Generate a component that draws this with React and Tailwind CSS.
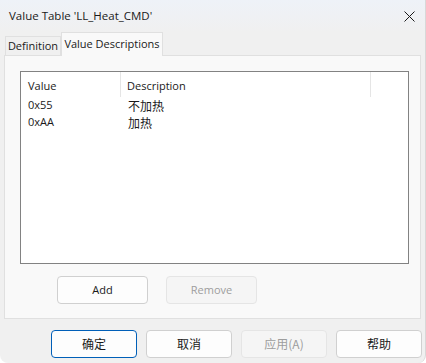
import React from "react";

const font = { fontFamily: '"Open Sans", "Noto Sans", "Noto Sans CJK SC", sans-serif' };
const cjk = { fontFamily: '"Noto Sans CJK SC", sans-serif' };

function Btn({ children, disabled, primary, className = "" }) {
  let tone = "bg-[#fdfdfd] border-[#d0d0d0] text-[#1a1a1a]";
  if (disabled) tone = "bg-[#f5f5f5] border-[#e5e5e5] text-[#9d9d9d]";
  if (primary) tone = "bg-[#fdfdfd] border-[#005fb8] text-[#1a1a1a]";
  return (
    <div className={`flex items-center justify-center rounded-[4px] border whitespace-nowrap ${tone} ${className}`}>
      {children}
    </div>
  );
}

export default function App() {
  const rows = [
    { value: "0x55", desc: "不加热" },
    { value: "0xAA", desc: "加热" },
  ];

  return (
    <div style={font} className="w-[426px] h-[363px] bg-[#f0f0f0] flex flex-col border-r border-[#d8d8d8] rounded-b-[8px] overflow-hidden text-[11px]">
      {/* title bar */}
      <div className="h-[32px] shrink-0 flex items-center justify-between bg-gradient-to-b from-[#eef2f8] to-[#f0f0f0] pl-[9px] pr-[10px]">
        <span className="text-[11.5px] text-[#1a1a1a] whitespace-nowrap">Value Table 'LL_Heat_CMD'</span>
        <svg width="11" height="11" viewBox="0 0 11 11">
          <path d="M0.5 0.5 L10.5 10.5 M10.5 0.5 L0.5 10.5" stroke="#1a1a1a" strokeWidth="1" />
        </svg>
      </div>

      {/* tabs */}
      <div className="h-[23px] shrink-0 flex items-end pl-[5px] relative z-10">
        <div className="h-[19px] w-[56px] flex items-center justify-center border border-b-0 border-[#e0e0e0] bg-[#f0f0f0] text-[#1a1a1a] whitespace-nowrap">
          Definition
        </div>
        <div className="h-[24px] w-[102px] -mb-[1px] flex items-start pt-[3px] justify-center border border-b-0 border-[#e0e0e0] bg-[#f9f9f9] text-[#1a1a1a] whitespace-nowrap">
          Value Descriptions
        </div>
      </div>

      {/* tab panel */}
      <div className="ml-[4px] w-[417px] h-[264px] shrink-0 border border-[#e0e0e0] bg-[#f9f9f9] flex flex-col">
        <div className="ml-[15px] mt-[15px] w-[389px] h-[193px] border border-[#828282] bg-white flex flex-col text-[#1a1a1a]">
          <div className="h-[25px] flex">
            <div className="w-[100px] pl-[7px] pt-[6px] border-r border-[#e5e5e5]">Value</div>
            <div className="w-[250px] pl-[6px] pt-[6px] border-r border-[#e5e5e5]">Description</div>
          </div>
          {rows.map((r) => (
            <div key={r.value} className="h-[17px] flex items-center">
              <div className="w-[100px] pl-[7px]">{r.value}</div>
              <div className="pl-[7px] text-[12px]" style={cjk}>{r.desc}</div>
            </div>
          ))}
        </div>
        <div className="flex gap-[18px] ml-[52px] mt-[12px]">
          <Btn className="w-[91px] h-[28px]">Add</Btn>
          <Btn disabled className="w-[91px] h-[28px]">Remove</Btn>
        </div>
      </div>

      {/* dialog buttons */}
      <div className="flex gap-[9px] ml-[51px] mt-[11px] text-[12px]" style={cjk}>
        <Btn primary className="w-[86px] h-[28px]">确定</Btn>
        <Btn className="w-[86px] h-[28px]">取消</Btn>
        <Btn disabled className="w-[86px] h-[28px]">应用(A)</Btn>
        <Btn className="w-[86px] h-[28px]">帮助</Btn>
      </div>
    </div>
  );
}
